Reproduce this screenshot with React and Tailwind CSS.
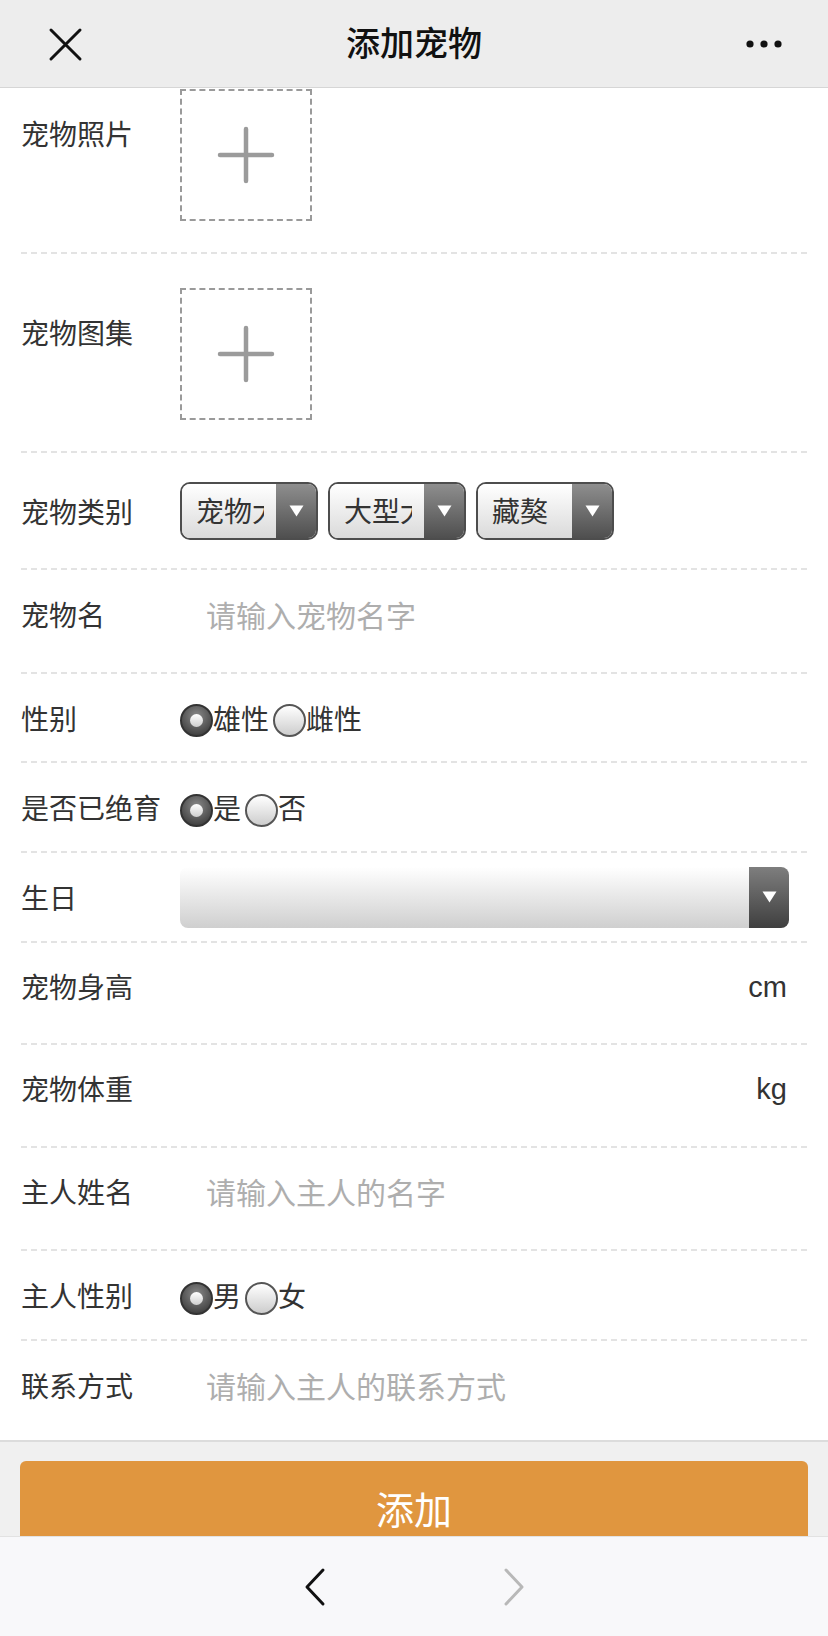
import React from 'react';

const Sep = () => (
  <div className="mx-[21px] h-[2px] shrink-0 bg-[repeating-linear-gradient(to_right,#e3e3e3_0,#e3e3e3_6px,transparent_6px,transparent_10px)]" />
);

// pt-[6px] drops the CJK text 3px when centred, matching the reference baseline
const Label = ({ children, className = '' }) => (
  <div className={`w-[159px] shrink-0 whitespace-nowrap pt-[6px] text-[28px] leading-[40px] text-[#333] ${className}`}>{children}</div>
);

const Upload = () => (
  <div className="flex h-[132px] w-[132px] shrink-0 items-center justify-center border-2 border-dashed border-[#9a9a9a]">
    <svg width="58" height="58" viewBox="0 0 58 58">
      <path d="M29 3v52M3 29h52" stroke="#9b9b9b" strokeWidth="4.5" strokeLinecap="round" />
    </svg>
  </div>
);

const Caret = () => (
  <svg width="15" height="12" viewBox="0 0 15 12">
    <path d="M0.5 0.5h14L7.5 11.5z" fill="#fff" />
  </svg>
);

const Select = ({ value }) => (
  <div className="flex h-[58px] w-[138px] overflow-hidden rounded-[10px] border-2 border-[#4d4d4d]">
    <div className="flex min-w-0 flex-1 items-center bg-[linear-gradient(#ffffff,#dadada)] pl-[14px] pr-[12px] pt-[4px]">
      <span className="overflow-hidden whitespace-nowrap text-[28px] leading-[40px] text-[#333]">{value}</span>
    </div>
    <div className="flex w-[40px] shrink-0 items-center justify-center bg-[linear-gradient(#8e8e8e,#4f4f4f)]">
      <Caret />
    </div>
  </div>
);

const Radio = ({ checked }) =>
  checked ? (
    <span className="flex h-[33px] w-[33px] shrink-0 items-center justify-center rounded-full border-2 border-[#333] bg-[radial-gradient(circle_at_50%_35%,#8a8a8a,#2f2f2f)]">
      <span className="h-[13px] w-[13px] rounded-full bg-[linear-gradient(#ffffff,#cfcfcf)]" />
    </span>
  ) : (
    <span className="h-[33px] w-[33px] shrink-0 rounded-full border-2 border-[#555] bg-[linear-gradient(#ffffff,#cdcdcd)]" />
  );

const RadioGroup = ({ options }) => (
  <div className="flex items-center gap-[4px] pt-[6px] text-[28px] leading-[40px] text-[#333]">
    {options.map((o, i) => (
      <div key={o} className="flex items-center">
        <Radio checked={i === 0} />
        <span>{o}</span>
      </div>
    ))}
  </div>
);

const TextInput = ({ placeholder }) => (
  <input
    placeholder={placeholder}
    className="mt-[6px] h-[40px] min-w-0 flex-1 bg-transparent pl-[26px] text-[30px] leading-[40px] text-[#333] outline-none placeholder:text-[#aeaeae]"
  />
);

export default function App() {
  return (
    <div className="relative flex h-[1636px] w-[828px] flex-col overflow-hidden bg-[#f0f0f0] font-['Liberation_Sans','Noto_Sans_CJK_SC',sans-serif]">
      {/* Header */}
      <div className="flex h-[88px] shrink-0 items-center justify-between border-b border-[#d6d6d6] bg-[#ededed] px-[46px]">
        <svg width="38" height="38" viewBox="0 0 38 38">
          <path d="M5 5l29 29M34 5L5 34" stroke="#111" strokeWidth="3" strokeLinecap="round" />
        </svg>
        <div className="text-[34px] font-medium leading-[40px] text-[#111]">添加宠物</div>
        <svg width="38" height="10" viewBox="0 0 38 10">
          <circle cx="6" cy="5" r="3.6" fill="#111" />
          <circle cx="20" cy="5" r="3.6" fill="#111" />
          <circle cx="34" cy="5" r="3.6" fill="#111" />
        </svg>
      </div>

      {/* Scroll area */}
      <div className="min-h-0 flex-1 overflow-hidden">
        <div className="border-b-2 border-[#dcdcdc] bg-white">
          <div className="flex h-[164px] items-start px-[21px] pt-[1px]">
            <Label className="mt-[21px]">宠物照片</Label>
            <Upload />
          </div>
          <Sep />
          <div className="flex h-[197px] items-start px-[21px] pt-[34px]">
            <Label className="mt-[21px]">宠物图集</Label>
            <Upload />
          </div>
          <Sep />
          <div className="flex h-[115px] items-center px-[21px]">
            <Label>宠物类别</Label>
            <div className="flex gap-[10px]">
              <Select value="宠物大小" />
              <Select value="大型犬" />
              <Select value="藏獒" />
            </div>
          </div>
          <Sep />
          <div className="flex h-[102px] items-start px-[21px] pt-[21px]">
            <Label>宠物名</Label>
            <TextInput placeholder="请输入宠物名字" />
          </div>
          <Sep />
          <div className="flex h-[87px] items-center px-[21px]">
            <Label>性别</Label>
            <RadioGroup options={['雄性', '雌性']} />
          </div>
          <Sep />
          <div className="flex h-[88px] items-center px-[21px]">
            <Label>是否已绝育</Label>
            <RadioGroup options={['是', '否']} />
          </div>
          <Sep />
          <div className="flex h-[88px] items-center pl-[21px] pr-[39px]">
            <Label>生日</Label>
            <div className="flex h-[61px] flex-1 overflow-hidden rounded-[8px]">
              <div className="flex-1 bg-[linear-gradient(#ffffff,#cfcfcf)]" />
              <div className="flex w-[40px] shrink-0 items-center justify-center bg-[linear-gradient(#7e7e7e,#3f3f3f)]">
                <Caret />
              </div>
            </div>
          </div>
          <Sep />
          <div className="flex h-[100px] items-start pl-[21px] pr-[41px] pt-[20px]">
            <Label>宠物身高</Label>
            <input className="mt-[4px] h-[40px] min-w-0 flex-1 bg-transparent outline-none" />
            <span className="mt-[4px] text-[29px] leading-[40px] text-[#333]">cm</span>
          </div>
          <Sep />
          <div className="flex h-[101px] items-start pl-[21px] pr-[41px] pt-[20px]">
            <Label>宠物体重</Label>
            <input className="mt-[4px] h-[40px] min-w-0 flex-1 bg-transparent outline-none" />
            <span className="mt-[4px] text-[29px] leading-[40px] text-[#333]">kg</span>
          </div>
          <Sep />
          <div className="flex h-[101px] items-start px-[21px] pt-[20px]">
            <Label>主人姓名</Label>
            <TextInput placeholder="请输入主人的名字" />
          </div>
          <Sep />
          <div className="flex h-[88px] items-center px-[21px]">
            <Label>主人性别</Label>
            <RadioGroup options={['男', '女']} />
          </div>
          <Sep />
          <div className="flex h-[99px] items-start px-[21px] pt-[21px]">
            <Label>联系方式</Label>
            <TextInput placeholder="请输入主人的联系方式" />
          </div>
        </div>

        <div className="px-[20px] pt-[19px]">
          <button className="flex h-[96px] w-full items-center justify-center rounded-[6px] bg-[#e0963f] pt-[4px] text-[38px] leading-[48px] text-white">
            添加
          </button>
        </div>
      </div>

      {/* Bottom toolbar */}
      <div className="flex h-[100px] shrink-0 items-center justify-center gap-[175px] border-t border-[#e2e2e2] bg-[#f8f8fa]">
        <svg width="24" height="40" viewBox="0 0 24 40">
          <path d="M20 3L4 20l16 17" fill="none" stroke="#111" strokeWidth="3" strokeLinecap="round" strokeLinejoin="round" />
        </svg>
        <svg width="24" height="40" viewBox="0 0 24 40">
          <path d="M4 3l16 17L4 37" fill="none" stroke="#b8b8b8" strokeWidth="3" strokeLinecap="round" strokeLinejoin="round" />
        </svg>
      </div>
    </div>
  );
}
